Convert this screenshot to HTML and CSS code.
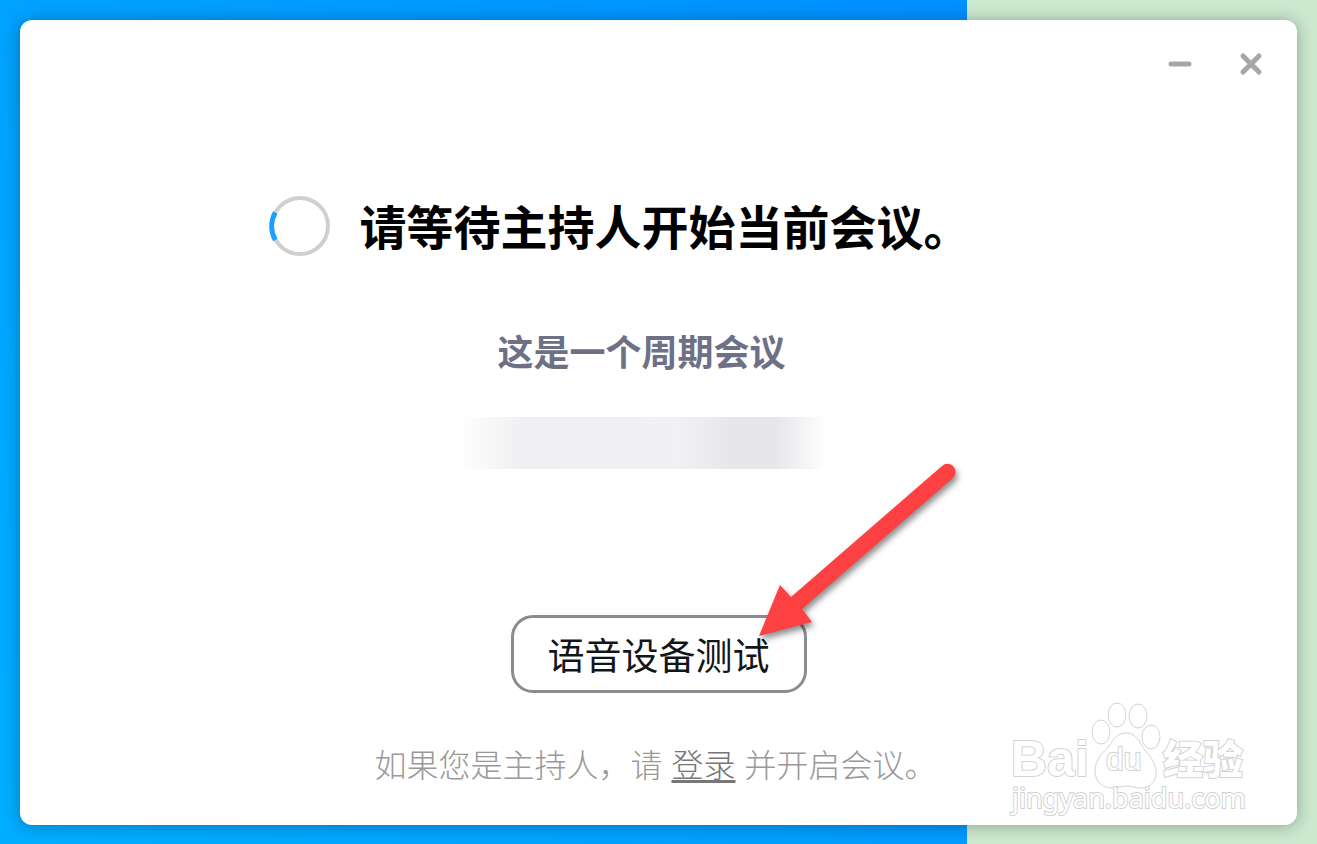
FILE: index.html
```html
<!DOCTYPE html>
<html lang="zh-CN">
<head>
    <meta charset="utf-8">
    <title>等待会议开始</title>
    <link rel="stylesheet" href="styles.css">
</head>
<body>
    <main class="dialog">
        <div class="window-controls">
            <button type="button" class="control" aria-label="最小化">
                <svg width="28" height="28" viewBox="0 0 28 28"><path d="M5 14H23"/></svg>
            </button>
            <button type="button" class="control" aria-label="关闭">
                <svg width="28" height="28" viewBox="0 0 28 28"><path d="M6 6L22 22M22 6L6 22"/></svg>
            </button>
        </div>

        <div class="status">
            <div class="status-row">
                <svg class="spinner" width="62" height="62" viewBox="0 0 62 62">
                    <circle class="track" cx="31" cy="31" r="28"/>
                    <path class="arc" d="M6.3 17.5A28 28 0 0 0 6.3 45"/>
                </svg>
                <h1>请等待主持人开始当前会议。</h1>
            </div>
            <h2>这是一个周期会议</h2>
            <div class="topic"></div>
        </div>

        <button type="button" class="test-button">语音设备测试</button>
        <p class="hint">如果您是主持人，请 <a href="#">登录</a> 并开启会议。</p>

        <svg class="arrow" width="230" height="200" viewBox="0 0 230 200">
            <path d="M19 176L40 125L51 137L202 6A8 8 0 0 1 213 18L62 149L72 162Z"/>
        </svg>

        <svg class="watermark" width="245" height="120" viewBox="0 0 245 120">
            <text class="brand" x="6" y="76">Bai</text>
            <ellipse cx="96" cy="32" rx="9" ry="12"/>
            <ellipse cx="112" cy="15" rx="9" ry="12"/>
            <ellipse cx="133" cy="16" rx="9" ry="12"/>
            <ellipse cx="146" cy="37" rx="9" ry="12"/>
            <path d="M121 33C112 33 108 40 104 46C99 52 90 58 90 71C90 81 97 88 107 88C113 88 116 86 121 86C127 86 130 88 136 88C146 88 152 80 151 71C150 59 141 53 137 46C133 39 130 33 121 33Z"/>
            <text class="du" x="101" y="70">du</text>
            <text class="cjk" x="158" y="74">经验</text>
            <text class="site" x="7" y="108">jingyan.baidu.com</text>
        </svg>
    </main>
</body>
</html>
```
FILE: styles.css
```css
* {
    box-sizing: border-box;
}
body {
    margin: 0;
    min-height: 100vh;
    padding: 20px 20px 19px;
    display: flex;
    font-family: "Liberation Sans", "Noto Sans CJK SC", sans-serif;
    background: linear-gradient(90deg, transparent 967px, #cce8cf 967px),
        linear-gradient(55deg, #00aeff, #0088ff);
}
.dialog {
    position: relative;
    flex: 1;
    display: flex;
    flex-direction: column;
    align-items: center;
    padding: 20px 0 34px;
    background: #fff;
    border-radius: 12px;
    box-shadow: 0 1px 16px rgba(0, 0, 0, 0.3);
}
.window-controls {
    align-self: flex-end;
    display: flex;
    gap: 23px;
    padding-right: 22px;
}
.control {
    width: 48px;
    height: 48px;
    padding: 0;
    border: 0;
    background: none;
    display: flex;
    align-items: center;
    justify-content: center;
    cursor: pointer;
}
.control path {
    stroke: #a6a6a6;
    stroke-width: 5;
    stroke-linecap: round;
}
.status {
    display: flex;
    flex-direction: column;
    align-items: center;
    margin-top: 107px;
    padding-right: 34px;
}
.status-row {
    display: flex;
    align-items: flex-start;
    gap: 29px;
    padding-right: 44px;
}
.spinner {
    fill: none;
    stroke-width: 4;
}
.track {
    stroke: #cfcfcf;
}
.arc {
    stroke: #1e9fff;
    stroke-width: 5;
}
h1 {
    margin: 0;
    font-size: 47px;
    line-height: 68px;
    font-weight: bold;
    color: #000;
}
h2 {
    margin: 67px 0 0;
    font-size: 36px;
    line-height: 48px;
    font-weight: bold;
    color: #6e7086;
}
.topic {
    width: 370px;
    height: 52px;
    margin-top: 39px;
    background: linear-gradient(90deg, #fff, #f0f0f2 17%, #f1f1f3 60%, #e6e6ea 76%, #e7e7eb 86%, #fff);
}
.test-button {
    height: 78px;
    margin-top: 146px;
    padding: 0 34px;
    border: 3px solid #8b8b90;
    border-radius: 22px;
    background: #fff;
    font-family: inherit;
    font-size: 37px;
    color: #131619;
    cursor: pointer;
}
.hint {
    margin: 49px 0 0;
    padding-right: 6px;
    font-size: 32px;
    line-height: 48px;
    font-weight: 300;
    color: #999;
}
.hint a {
    color: #777;
    text-underline-offset: 3px;
}
.arrow {
    position: absolute;
    left: 720px;
    top: 440px;
    fill: #fd4142;
    filter: drop-shadow(2px 4px 3px rgba(0, 0, 0, 0.45));
    pointer-events: none;
}
.watermark {
    position: absolute;
    right: 47px;
    bottom: 5px;
    fill: #fff;
    stroke: #d2d2d2;
    stroke-width: 1;
    pointer-events: none;
}
.watermark text {
    stroke-width: 2;
    paint-order: stroke;
}
.watermark .brand {
    font-size: 50px;
    font-weight: bold;
}
.watermark .du {
    font-size: 32px;
}
.watermark .cjk {
    font-size: 40px;
    font-weight: 900;
}
.watermark .site {
    font-family: "Noto Sans", sans-serif;
    font-size: 27px;
}
```
